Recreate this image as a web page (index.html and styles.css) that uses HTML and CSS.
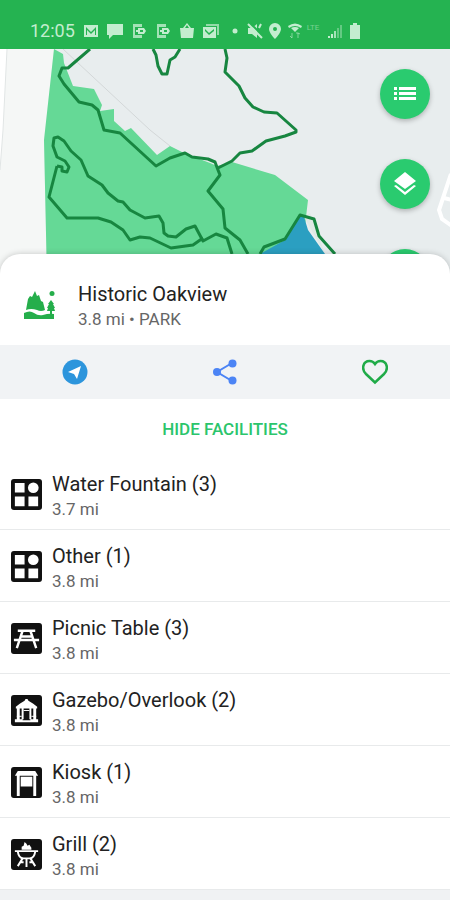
FILE: index.html
```html
<!DOCTYPE html>
<html lang="en">
<head>
    <meta charset="utf-8">
    <meta name="viewport" content="width=device-width, initial-scale=1">
    <title>Historic Oakview</title>
    <link rel="stylesheet" href="styles.css">
</head>
<body>
    <!-- Shared facility icon -->
    <svg class="sprite" aria-hidden="true">
        <symbol id="icon-other" viewBox="0 0 32 32">
            <rect width="32" height="32" rx="3" fill="#111"/>
            <path fill="#fff" d="M4 4h10v10H4zM4 18h10v10H4zM18 18h10v10H18z"/>
            <circle cx="23" cy="9" r="5.5" fill="#fff"/>
        </symbol>
    </svg>

    <header class="status-bar">
        <span class="time">12:05</span>
        <div class="status-icons">
            <svg viewBox="0 0 16 16"><path fill-rule="evenodd" d="M1 2h14v12H1zM3 4v8h10V4l-5 5z"/><path d="M4 12V7l4 4 4-4v5z"/></svg>
            <svg viewBox="0 0 16 16"><path d="M0 1h16v11H6l-4 4v-4H0z"/></svg>
            <svg viewBox="0 0 16 16"><path d="M2 1h9v3H4v8h7v3H2z" opacity=".8"/><path fill-rule="evenodd" d="M7 5h6l2 3-2 3H7V9H5V7h2zM9 7v2h3V7z"/></svg>
            <svg viewBox="0 0 16 16"><path d="M2 1h9v3H4v8h7v3H2z" opacity=".8"/><path fill-rule="evenodd" d="M7 5h6l2 3-2 3H7V9H5V7h2zM9 7v2h3V7z"/></svg>
            <svg viewBox="0 0 16 16"><path fill-rule="evenodd" d="M1 5h3l4-5 4 5h3l-1 10H2zM6 5h4L8 2z"/></svg>
            <svg viewBox="0 0 16 16"><path fill-rule="evenodd" d="M0 4h13v11H0zM2 6v2l4 4 5-4V6l-5 4z"/><path d="M3 1h13v11h-2V3H3z" opacity=".7"/></svg>
            <svg viewBox="0 0 16 16"><circle cx="8" cy="8" r="2.5"/></svg>
        </div>
        <div class="status-icons system">
            <svg viewBox="0 0 16 16"><path d="M1 5h4l5-4v14l-5-4H1z"/><path d="M3 0l14 14" stroke="#25b351" stroke-width="2"/><path d="M1 1l14 14M12 5l2-4" stroke="#c3edcf" stroke-width="2" fill="none"/></svg>
            <svg viewBox="0 0 16 16"><path fill-rule="evenodd" d="M8 0a6 6 0 0 1 6 6c0 4-6 10-6 10S2 10 2 6a6 6 0 0 1 6-6zm0 4a2 2 0 1 0 0 4 2 2 0 0 0 0-4z"/></svg>
            <svg viewBox="0 0 16 16"><path d="M1 3q7-5 14 0l-1 2Q8 1 2 5zM4 5q4-2 8 0L8 9z"/><path d="M5 10v5m-2-2l2 2M11 15v-5h-2m2 0l2 1" stroke="#c3edcf" fill="none" opacity=".6"/></svg>
            <span class="network">LTE</span>
            <svg viewBox="0 0 16 16"><path d="M1 13h2v2H1zM4 11h2v4H4z"/><path d="M7 8h2v7H7z" opacity=".8"/><path d="M10 5h2v10h-2zM13 2h2v13h-2z" opacity=".4"/></svg>
            <svg viewBox="0 0 16 16"><path d="M3 2h3V0h4v2h3v14H3z"/></svg>
        </div>
    </header>

    <section class="map">
        <svg class="map-canvas" viewBox="0 49 450 231" preserveAspectRatio="xMidYMin slice" aria-hidden="true">
            <rect y="49" width="450" height="231" fill="#e8edee"/>
            <path fill="#f5f7f6" d="M0 49h54L44 140l3 140H0z"/>
            <path fill="#fff" d="M0 49h7L3 130 0 170z"/>
            <path fill="none" stroke="#e1e5e5" d="M7 49L3 130 0 170"/>
            <path fill="none" stroke="#d3d7d8" d="M63 49l87 81 20 16"/>
            <path fill="#65d996" d="M54 49l9 5 1 9 9 23 21 3 8 16-2 6 14-2v12l11 10 6-3 26 27 13-9 14 7 26 10 7 3 15-4 43 13 33 25-2 17-6 63H47L44 140z"/>
            <path fill="#dfe9e5" d="M304 217l6-4 15 41z"/>
            <path fill="#2b9fc1" d="M299 216l5 1 4 13 17 24v26h-65v-26l25-14z"/>
            <g class="trails">
                <path d="M90 49L68 68h-6l-3 8 5 8 15 18 13 3 6 5 6 20 16 3 36 33 14-8 15-5 7 4 16 2 7 3 3 8 2 5-12 16 15 18 2 19 15 12 8 14"/>
                <path d="M153 49l3 6 2 11 4 8h5l3-14 5-3 5-8"/>
                <path d="M225 49l2 9-2 14 14 14 6 12 8 9 11 5 13 1 19 17v2l-11 4-19 5-14 10-12 2-8 8-14 7"/>
                <path d="M57 166l5 1v4l5 1 2-5-4-6-8-4-4-11 1-8 4-1 6 4 7 10 10 9 7 16 14 9 6 8 10 8 5 1 7 8 15 8 14-2 4 7 1 10 4 3 8 1 10-8 9-3 8 15 13-7 11 4 5 16"/>
                <path d="M57 166l-8 31 18 21h31l13 4 12 8 7 10 10-3 10 1 21 10 22-3 10-7"/>
                <path d="M260 254l4-7 21-8 15-24 14 4 5 17 16 18"/>
            </g>
            <path fill="none" stroke="#fff" stroke-width="4" d="M451 174l-12 36 3 9 10 7M444 198l8 2"/>
        </svg>
        <div class="map-buttons">
            <button class="fab" aria-label="List">
                <svg viewBox="0 0 24 24"><path d="M1 5h3v3H1zM6 5h17v3H6zM1 10h3v3H1zM6 10h17v3H6zM1 15h3v3H1zM6 15h17v3H6z"/></svg>
            </button>
            <button class="fab" aria-label="Layers">
                <svg viewBox="0 0 24 24"><path d="M12 0l11 9-11 8L1 9zM1 14l2-1 9 7 9-7 2 1-11 9z"/></svg>
            </button>
            <button class="fab" aria-label="My location"></button>
        </div>
    </section>

    <main class="sheet">
        <div class="place">
            <svg class="place-icon" viewBox="0 0 32 30">
                <path d="M2 19L4 8l2-3 2 1 3-6 2 5 2-1 2 6 2 1 2 8q-4 2-8 0-6-2-11 0z"/>
                <path d="M0 22q6-3 10 0t9 2q6-2 11-1v5H0z"/>
                <circle cx="28" cy="2.500" r="2.500"/>
                <path d="M27 9l3 4h-1l2 4h-1l1 3h-3v3h-2v-3h-3l1-3h-1l2-4h-1z"/>
            </svg>
            <div>
                <h1>Historic Oakview</h1>
                <p>3.8 mi • PARK</p>
            </div>
        </div>

        <div class="actions">
            <button aria-label="Directions">
                <svg viewBox="0 0 26 26"><circle cx="13" cy="13" r="12.500" fill="#2d95dc"/><path fill="#fff" d="M19 7l-4 13-3-5-6-2z"/></svg>
            </button>
            <button aria-label="Share">
                <svg viewBox="0 0 26 26"><path d="M20 4L5 13l15 9" fill="none" stroke="#4c84f5" stroke-width="2"/><g fill="#4c84f5"><circle cx="20.500" cy="4.500" r="4"/><circle cx="5" cy="13" r="4"/><circle cx="20.500" cy="21.500" r="4"/></g></svg>
            </button>
            <button aria-label="Favorite">
                <svg viewBox="0 0 26 26"><path d="M13 23.500L4 15C-1 10 1 2 7.500 2Q11 2 13 5q2-3 5.500-3C25 2 27 10 22 15z" fill="none" stroke="#20ab48" stroke-width="2.500"/></svg>
            </button>
        </div>

        <button class="toggle">HIDE FACILITIES</button>

        <ul class="facilities">
            <li>
                <svg viewBox="0 0 32 32"><use href="#icon-other"/></svg>
                <div>
                    <h2>Water Fountain (3)</h2>
                    <p>3.7 mi</p>
                </div>
            </li>
            <li>
                <svg viewBox="0 0 32 32"><use href="#icon-other"/></svg>
                <div>
                    <h2>Other (1)</h2>
                    <p>3.8 mi</p>
                </div>
            </li>
            <li>
                <svg viewBox="0 0 32 32"><rect width="32" height="32" rx="3" fill="#111"/><path d="M7 8h18M3 17.500h26M12 8L6 26M20 8l6 18M10 14h12" fill="none" stroke="#fff" stroke-width="2.500"/></svg>
                <div>
                    <h2>Picnic Table (3)</h2>
                    <p>3.8 mi</p>
                </div>
            </li>
            <li>
                <svg viewBox="0 0 32 32"><rect width="32" height="32" rx="3" fill="#111"/><path fill="#fff" d="M15 4h2l1 2 5 3 4 3v2H5v-2l4-3 5-3zM6 14h3v11H6zM11 14h2v11h-2zM19 14h2v11h-2zM23 14h3v11h-3zM4 25h8v3H4zM20 25h8v3h-8zM12 26h8v2h-8z"/><path d="M6 22h5M21 22h5M13 16h6" stroke="#fff"/></svg>
                <div>
                    <h2>Gazebo/Overlook (2)</h2>
                    <p>3.8 mi</p>
                </div>
            </li>
            <li>
                <svg viewBox="0 0 32 32"><rect width="32" height="32" rx="3" fill="#111"/><path fill="#fff" d="M7 4h18l3 5H4zM6 9h3v21H6zM23 9h3v21h-3zM10 10h12v10H10z"/></svg>
                <div>
                    <h2>Kiosk (1)</h2>
                    <p>3.8 mi</p>
                </div>
            </li>
            <li>
                <svg viewBox="0 0 32 32"><rect width="32" height="32" rx="3" fill="#111"/><path d="M4 12.500h24M7 13q1 7 6 7h6q5 0 6-7M12 20l-5 8M20 20l5 8M16 20v9M10 24h3M19 24h3" fill="none" stroke="#fff" stroke-width="2"/><path fill="#fff" d="M11 11V8l2-1 1-4 2 2 1 2 2-1 2 3v2z"/></svg>
                <div>
                    <h2>Grill (2)</h2>
                    <p>3.8 mi</p>
                </div>
            </li>
        </ul>
    </main>
</body>
</html>
```

FILE: styles.css
```css
* {
    box-sizing: border-box;
}

body {
    margin: 0;
    font-family: Roboto, Arial, sans-serif;
    background-color: #f0f2f3;
    color: #222;
}

h1, h2, p, ul {
    margin: 0;
    padding: 0;
}

button {
    border: none;
    padding: 0;
    font-family: inherit;
    cursor: pointer;
}

.sprite {
    display: none;
}

/* Status bar */
.status-bar {
    display: flex;
    align-items: center;
    height: 49px;
    padding: 12px 0 0 30px;
    background-color: #25b351;
    color: #c3edcf;
}

.time {
    font-size: 18px;
}

.status-icons {
    display: flex;
    align-items: center;
    gap: 8px;
    margin-left: 8px;
}

.status-icons.system {
    gap: 4px;
    margin-left: 4px;
}

.status-icons svg {
    width: 16px;
    height: 16px;
    fill: #c3edcf;
}

.status-icons .network {
    width: 16px;
    padding-bottom: 6px;
    font-size: 8px;
    opacity: 0.5;
}

/* Map */
.map {
    position: relative;
    height: 231px;
    overflow: hidden;
}

.map-canvas {
    display: block;
    width: 100%;
    height: 100%;
}

.trails {
    fill: none;
    stroke: #178640;
    stroke-width: 3;
    stroke-linejoin: round;
}

.map-buttons {
    position: absolute;
    top: 20px;
    right: 20px;
    display: flex;
    flex-direction: column;
    gap: 40px;
}

.fab {
    display: flex;
    align-items: center;
    justify-content: center;
    width: 50px;
    height: 50px;
    border-radius: 50%;
    background-color: #2acb6f;
    box-shadow: 0 2px 5px rgba(0, 0, 0, 0.25);
}

.fab svg {
    width: 24px;
    height: 24px;
    fill: #fff;
}

/* Bottom sheet */
.sheet {
    position: relative;
    margin-top: -26px;
    border-radius: 20px 20px 0 0;
    background-color: #fff;
    box-shadow: 0 0 6px rgba(0, 0, 0, 0.2);
}

.place {
    display: flex;
    align-items: center;
    gap: 22px;
    padding: 27px 24px 14px;
}

.place-icon {
    width: 32px;
    height: 30px;
    fill: #25ae4b;
}

h1, h2 {
    font-size: 20px;
    font-weight: 400;
    line-height: 26px;
}

p {
    font-size: 17px;
    line-height: 24px;
    color: #666;
}

.actions {
    display: grid;
    grid-template-columns: repeat(3, 1fr);
    height: 54px;
    background-color: #f1f3f5;
}

.actions button {
    display: flex;
    align-items: center;
    justify-content: center;
    background: none;
}

.actions svg {
    width: 26px;
    height: 26px;
}

.toggle {
    display: block;
    width: 100%;
    height: 59px;
    background: none;
    color: #2bc56c;
    font-size: 17px;
    font-weight: 500;
}

.facilities {
    list-style-type: none;
}

.facilities li {
    display: flex;
    align-items: flex-start;
    gap: 10px;
    padding: 13px 11px 8px;
    border-bottom: 1px solid #e8eaeb;
}

.facilities svg {
    width: 31px;
    height: 31px;
    margin-top: 8px;
}
```
